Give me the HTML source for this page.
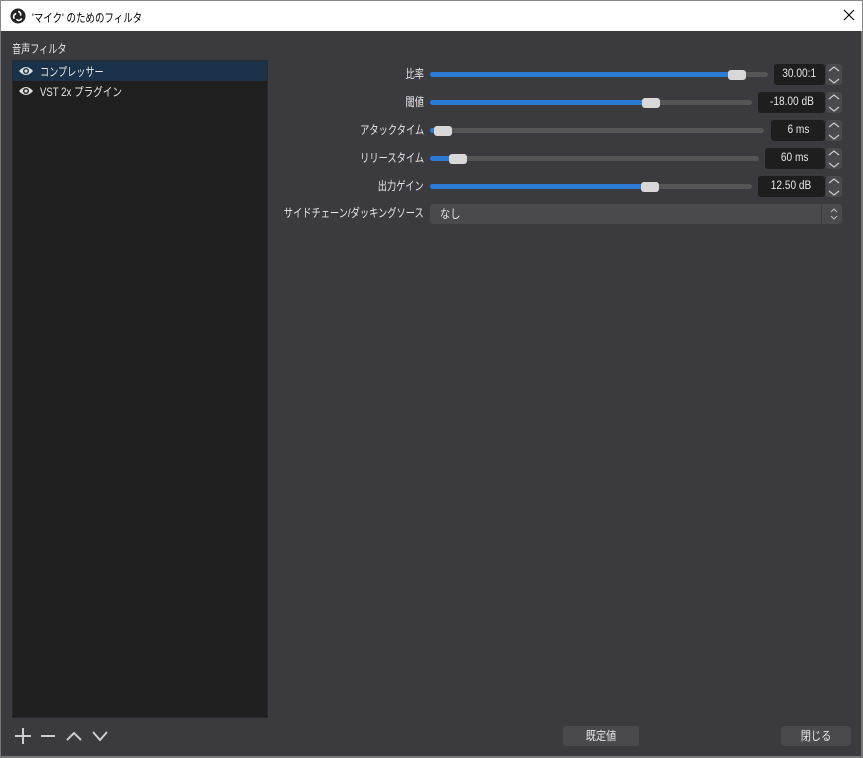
<!DOCTYPE html>
<html><head><meta charset="utf-8"><style>
*{margin:0;padding:0;box-sizing:border-box}
body{width:863px;height:758px;overflow:hidden;background:#3b3a3e;font-family:"Liberation Sans","Noto Sans CJK JP",sans-serif;font-size:12px;color:#e6e6e6;position:relative}
.a{position:absolute}
.c{display:inline-block;transform:scaleX(.76);transform-origin:left center;white-space:nowrap}
#title{left:0;top:0;width:863px;height:31px;background:#fff;color:#000;border:1px solid #888;border-bottom:none}
.lbl{right:439px;text-align:right;white-space:nowrap;font-size:12px;line-height:14px;transform:scaleX(.77);transform-origin:right center}
.track{height:5px;background:#555;border-radius:3px}
.fill{height:5px;background:#2a7bd6;border-radius:3px;left:0;top:0}
.h{width:18px;height:10px;background:#d8d8d8;border-radius:3px;top:-2.5px}
.box{height:21px;background:#1e1e1e;border-radius:3px;text-align:center;line-height:21px;font-size:11.5px}
.box span{display:inline-block;transform:scaleX(.88)}
.arr{left:826px;width:16px;height:21px;background:#4a494d;border-radius:3px}
.btn{background:#4a494d;border-radius:3px;text-align:center;line-height:20px;height:20px}
</style></head><body>
<div class="a" id="title">
<svg class="a" style="left:9px;top:7px" width="16" height="16" viewBox="0 0 16 16"><circle cx="8" cy="8" r="7.5" fill="#222"/><path d="M8 3.5a3 3 0 0 1 2.5 4.2M4.4 10.7a3 3 0 0 1 1.8-5M11.6 10.3a3 3 0 0 1-5.2 1" stroke="#fff" stroke-width="1.6" fill="none"/></svg>
<div class="a" style="left:31px;top:8px;font-size:12px"><span class="c" style="transform:scaleX(.79)">'マイク' のためのフィルタ</span></div>
<svg class="a" style="left:842px;top:8px" width="12" height="12" viewBox="0 0 12 12"><path d="M1 1l10 10M11 1L1 11" stroke="#000" stroke-width="1.1"/></svg>
</div>
<div class="a" style="left:0;top:31px;width:1px;height:727px;background:#777"></div>
<div class="a" style="left:861px;top:31px;width:2px;height:727px;background:#777"></div>
<div class="a" style="left:0;top:756px;width:863px;height:2px;background:#777"></div>
<div class="a" style="left:12px;top:40px"><span class="c">音声フィルタ</span></div>
<div class="a" style="left:12px;top:60px;width:256px;height:658px;background:#1f1f1f;border:1px solid #2a2a2a"></div>
<div class="a" style="left:13px;top:61px;width:254px;height:20px;background:#19324a"></div>
<svg class="a" style="left:18px;top:65px" width="16" height="12" viewBox="0 0 16 12"><path d="M1 6Q8-2 15 6Q8 14 1 6Z" fill="#ddd"/><circle cx="8" cy="6" r="3" fill="#19324a"/><circle cx="8" cy="6" r="1.6" fill="#ddd"/></svg>
<div class="a" style="left:40px;top:63px"><span class="c">コンプレッサー</span></div>
<svg class="a" style="left:18px;top:85px" width="16" height="12" viewBox="0 0 16 12"><path d="M1 6Q8-2 15 6Q8 14 1 6Z" fill="#ddd"/><circle cx="8" cy="6" r="3" fill="#1f1f1f"/><circle cx="8" cy="6" r="1.6" fill="#ddd"/></svg>
<div class="a" style="left:40px;top:83px"><span class="c" style="transform:scaleX(.8)">VST 2x プラグイン</span></div>

<div class="a lbl" style="top:67px">比率</div>
<div class="a track" style="left:430px;top:72px;width:338px"><div class="a fill" style="width:300px"></div><div class="a h" style="left:298px"></div></div>
<div class="a box" style="left:774px;top:64px;width:51px"><span>30.00:1</span></div>
<div class="a arr" style="top:64px"></div>

<div class="a lbl" style="top:95px">閾値</div>
<div class="a track" style="left:430px;top:100px;width:322px"><div class="a fill" style="width:215px"></div><div class="a h" style="left:212px"></div></div>
<div class="a box" style="left:758px;top:92px;width:67px"><span>-18.00 dB</span></div>
<div class="a arr" style="top:92px"></div>

<div class="a lbl" style="top:123px">アタックタイム</div>
<div class="a track" style="left:430px;top:128px;width:334px"><div class="a fill" style="width:6px"></div><div class="a h" style="left:4px"></div></div>
<div class="a box" style="left:771px;top:120px;width:54px"><span>6 ms</span></div>
<div class="a arr" style="top:120px"></div>

<div class="a lbl" style="top:151px">リリースタイム</div>
<div class="a track" style="left:430px;top:156px;width:329px"><div class="a fill" style="width:22px"></div><div class="a h" style="left:19px"></div></div>
<div class="a box" style="left:765px;top:148px;width:60px"><span>60 ms</span></div>
<div class="a arr" style="top:148px"></div>

<div class="a lbl" style="top:179px">出力ゲイン</div>
<div class="a track" style="left:430px;top:184px;width:322px"><div class="a fill" style="width:214px"></div><div class="a h" style="left:211px"></div></div>
<div class="a box" style="left:758px;top:176px;width:67px"><span>12.50 dB</span></div>
<div class="a arr" style="top:176px"></div>

<div class="a lbl" style="top:206px">サイドチェーン/ダッキングソース</div>
<div class="a" style="left:430px;top:204px;width:412px;height:20px;background:#4a494d;border-radius:3px;padding-left:10px;line-height:20px"><span class="c" style="transform:scaleX(.85)">なし</span></div>
<div class="a" style="left:821px;top:204px;width:1px;height:20px;background:#3b3a3e"></div>

<svg class="a" style="left:826px;top:64px" width="16" height="140" viewBox="0 0 16 140" fill="none" stroke="#ccc" stroke-width="1.2">
<path d="M3 7l5-4 5 4M3 15l5 4 5-4"/><path d="M3 35l5-4 5 4M3 43l5 4 5-4"/><path d="M3 63l5-4 5 4M3 71l5 4 5-4"/><path d="M3 91l5-4 5 4M3 99l5 4 5-4"/><path d="M3 119l5-4 5 4M3 127l5 4 5-4"/>
</svg>
<svg class="a" style="left:826px;top:204px" width="16" height="20" viewBox="0 0 16 20" fill="none" stroke="#bbb"><path d="M5 8l3-3 3 3M5 12l3 3 3-3"/></svg>

<svg class="a" style="left:14px;top:727px" width="100" height="18" viewBox="0 0 100 18" fill="none" stroke="#ccc" stroke-width="2">
<path d="M9 1v16M1 9h16M27 9h14M53 13l7-7 7 7M79 5l7 8 7-8"/></svg>
<div class="a btn" style="left:563px;top:726px;width:76px"><span class="c" style="transform:scaleX(.85);transform-origin:center">既定値</span></div>
<div class="a btn" style="left:781px;top:726px;width:70px"><span class="c" style="transform:scaleX(.85);transform-origin:center">閉じる</span></div>
</body></html>
